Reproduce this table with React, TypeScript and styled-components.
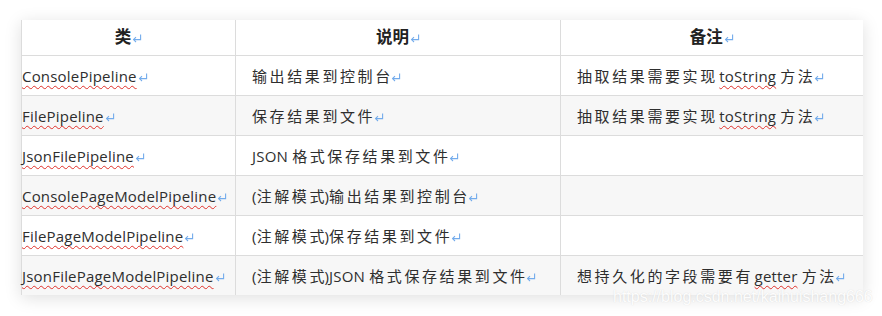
import React from "react";
import styled, { createGlobalStyle } from "styled-components";

const GlobalStyle = createGlobalStyle`
  html, body {
    margin: 0;
    padding: 0;
    background: #ffffff;
  }
`;

const Page = styled.div`
  position: relative;
  width: 882px;
  height: 316px;
  overflow: hidden;
  padding: 20px 0 0 21px;
  box-sizing: border-box;
  background: #ffffff;
`;

const Sheet = styled.table`
  width: 841px;
  border-collapse: collapse;
  table-layout: fixed;
  background: #ffffff;
  box-shadow: 0 3px 16px rgba(0, 0, 0, 0.13);
  font-family: "Open Sans", "Noto Sans CJK SC", sans-serif;
  font-size: 15px;
  color: #2e2e2e;
`;

const Row = styled.tr<{ $shade?: boolean; $last?: boolean }>`
  background: ${(p) => (p.$shade ? "#f7f7f7" : "#ffffff")};
  & > * {
    border-bottom: ${(p) => (p.$last ? "none" : "1px solid #dcdcdc")};
  }
`;

const HeadCell = styled.th`
  height: 32px;
  padding: 0 0 3px;
  text-align: center;
  vertical-align: middle;
  font-size: 16.5px;
  font-weight: 700;
  color: #222222;
  border-left: 1px solid #dcdcdc;
  white-space: nowrap;
`;

const Cell = styled.td<{ $flush?: boolean }>`
  height: 39px;
  padding: 0 0 0 ${(p) => (p.$flush ? "0" : "16px")};
  vertical-align: middle;
  border-left: 1px solid #dcdcdc;
  white-space: nowrap;
  overflow: visible;
`;

/* CJK runs are set loosely; the spacing sits between glyphs only */
const Han = styled.span`
  letter-spacing: 2.6px;
`;

const Latin = styled.span`
  letter-spacing: 0.2px;
`;

const Misspelt = styled(Latin)`
  text-decoration: underline wavy #e0302a;
  text-decoration-thickness: 1px;
  text-underline-offset: 3px;
  text-decoration-skip-ink: none;
`;

const MarkSvg = styled.svg`
  display: inline-block;
  width: 10px;
  height: 9px;
  margin-left: 1px;
  vertical-align: 0px;
`;

const ReturnMark = () => (
  <MarkSvg viewBox="0 0 10 9" fill="none" stroke="#74acec" strokeWidth="1.1">
    <path d="M8.6 0.5 V5.6 H1.6" />
    <path d="M4 3.2 L1.6 5.6 L4 8" />
  </MarkSvg>
);

const Watermark = styled.div`
  position: absolute;
  left: 613px;
  top: 288px;
  font-family: "Liberation Sans", Arial, sans-serif;
  font-size: 16px;
  color: rgba(255, 255, 255, 0.95);
  text-shadow: 0 0 1px rgba(150, 150, 150, 0.3);
  white-space: nowrap;
  pointer-events: none;
`;

type Part = { t: string; kind?: "han" | "bad" };

const rows: { name: string; desc: Part[]; note: Part[] }[] = [
  {
    name: "ConsolePipeline",
    desc: [{ t: "输出结果到控制台", kind: "han" }],
    note: [
      { t: "抽取结果需要实现", kind: "han" },
      { t: " " },
      { t: "toString", kind: "bad" },
      { t: " " },
      { t: "方法", kind: "han" },
    ],
  },
  {
    name: "FilePipeline",
    desc: [{ t: "保存结果到文件", kind: "han" }],
    note: [
      { t: "抽取结果需要实现", kind: "han" },
      { t: " " },
      { t: "toString", kind: "bad" },
      { t: " " },
      { t: "方法", kind: "han" },
    ],
  },
  {
    name: "JsonFilePipeline",
    desc: [{ t: "JSON " }, { t: "格式保存结果到文件", kind: "han" }],
    note: [],
  },
  {
    name: "ConsolePageModelPipeline",
    desc: [{ t: "(" }, { t: "注解模式", kind: "han" }, { t: ")" }, { t: "输出结果到控制台", kind: "han" }],
    note: [],
  },
  {
    name: "FilePageModelPipeline",
    desc: [{ t: "(" }, { t: "注解模式", kind: "han" }, { t: ")" }, { t: "保存结果到文件", kind: "han" }],
    note: [],
  },
  {
    name: "JsonFilePageModelPipeline",
    desc: [
      { t: "(" },
      { t: "注解模式", kind: "han" },
      { t: ")JSON " },
      { t: "格式保存结果到文件", kind: "han" },
    ],
    note: [
      { t: "想持久化的字段需要有", kind: "han" },
      { t: " " },
      { t: "getter", kind: "bad" },
      { t: " " },
      { t: "方法", kind: "han" },
    ],
  },
];

const Text = ({ parts }: { parts: Part[] }) => (
  <>
    {parts.map((p, i) =>
      p.kind === "han" ? (
        <React.Fragment key={i}>
          <Han>{p.t.slice(0, -1)}</Han>
          {p.t.slice(-1)}
        </React.Fragment>
      ) : p.kind === "bad" ? (
        <Misspelt key={i}>{p.t}</Misspelt>
      ) : (
        <Latin key={i}>{p.t}</Latin>
      )
    )}
  </>
);

export default function App() {
  return (
    <Page>
      <GlobalStyle />
      <Sheet>
        <colgroup>
          <col style={{ width: 214 }} />
          <col style={{ width: 325 }} />
          <col style={{ width: 302 }} />
        </colgroup>
        <thead>
          <Row>
            <HeadCell>
              类<ReturnMark />
            </HeadCell>
            <HeadCell>
              说明<ReturnMark />
            </HeadCell>
            <HeadCell>
              备注<ReturnMark />
            </HeadCell>
          </Row>
        </thead>
        <tbody>
          {rows.map((r, i) => (
            <Row key={r.name} $shade={i % 2 === 1} $last={i === rows.length - 1}>
              <Cell $flush>
                <Misspelt>{r.name}</Misspelt>
                <ReturnMark />
              </Cell>
              <Cell>
                <Text parts={r.desc} />
                <ReturnMark />
              </Cell>
              <Cell>
                {r.note.length > 0 && (
                  <>
                    <Text parts={r.note} />
                    <ReturnMark />
                  </>
                )}
              </Cell>
            </Row>
          ))}
        </tbody>
      </Sheet>
      <Watermark>https://blog.csdn.net/kaihuishang666</Watermark>
    </Page>
  );
}
